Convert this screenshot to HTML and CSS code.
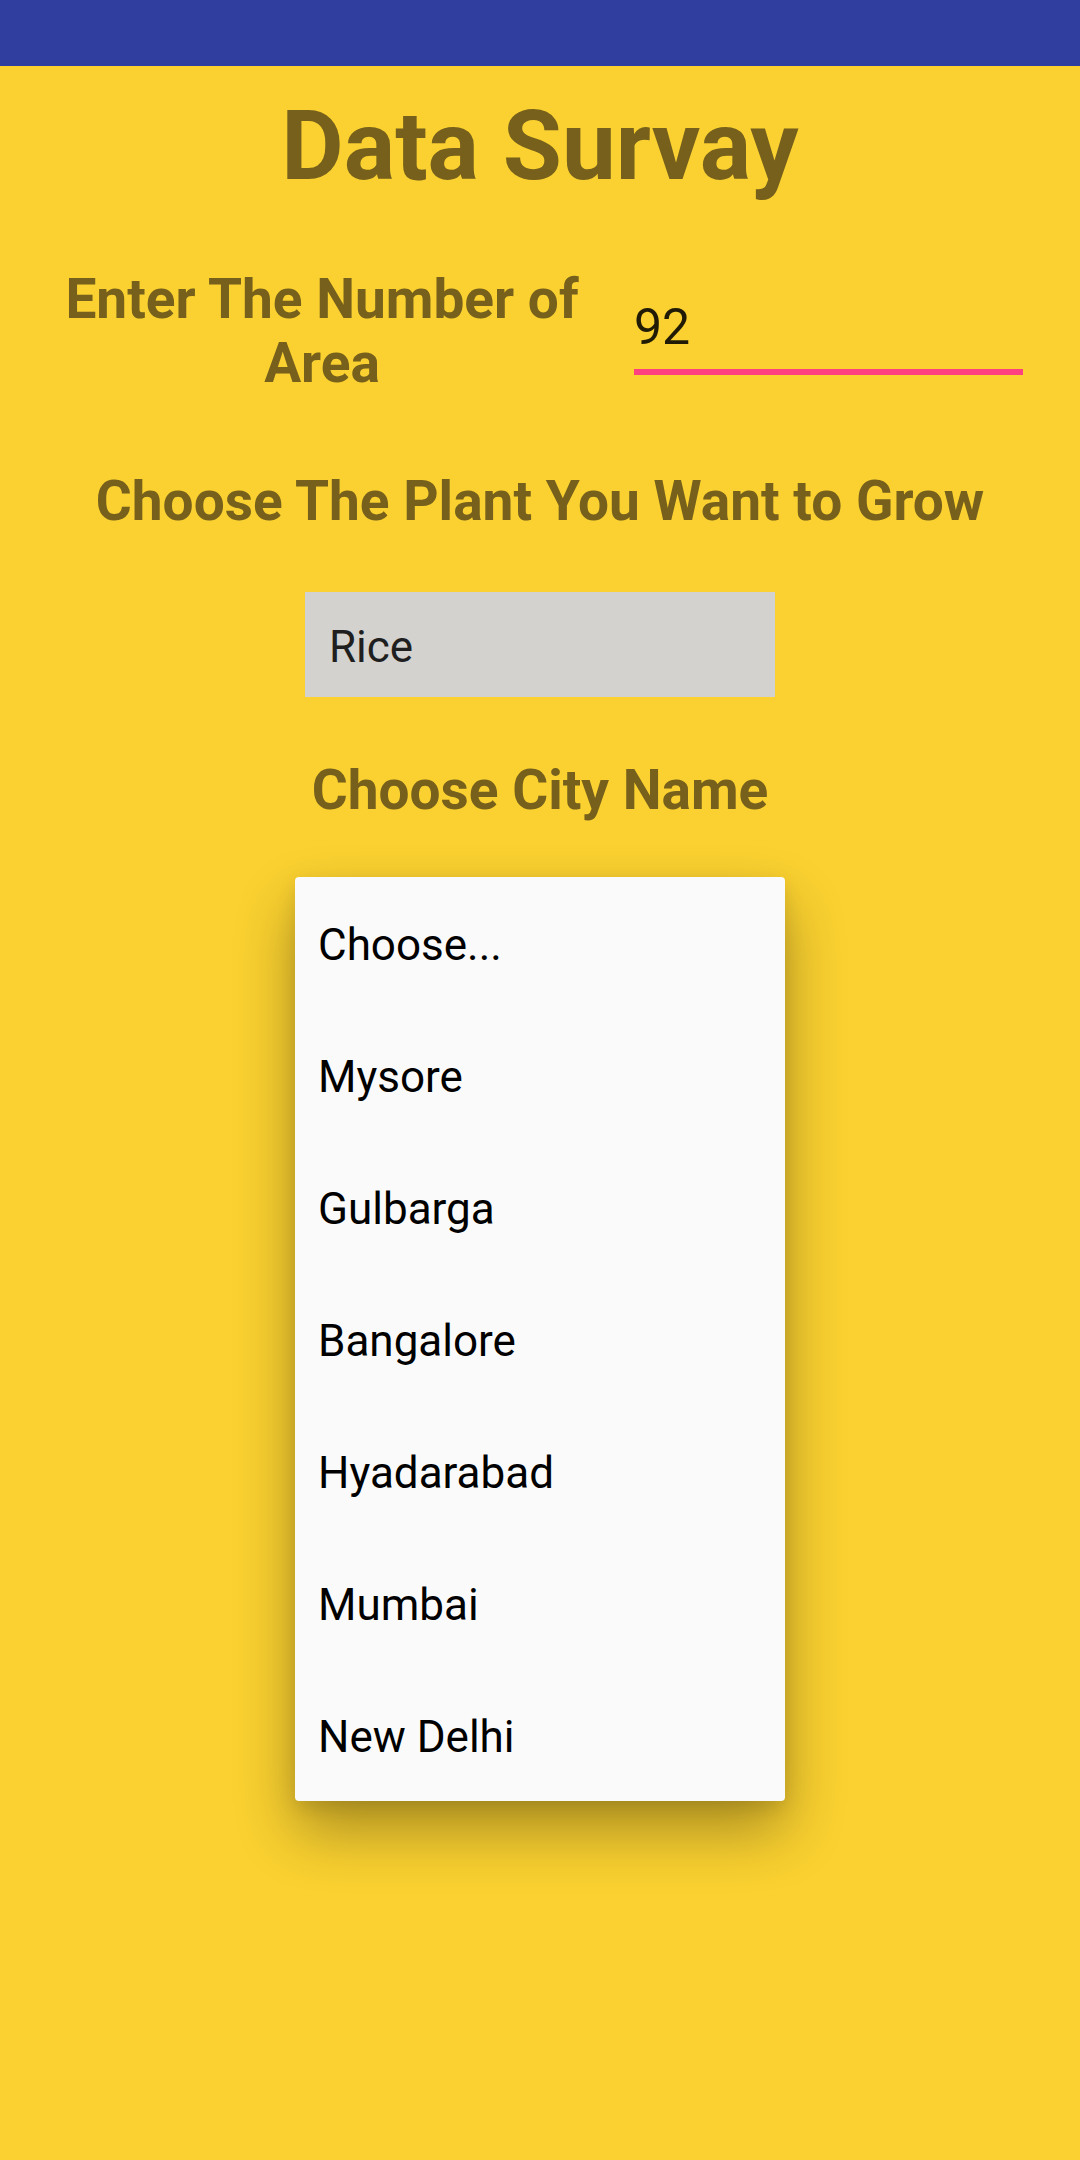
FILE: index.html
```html
<!DOCTYPE html>
<html>
<head>
<meta charset="utf-8">
<link rel="stylesheet" href="styles.css">
</head>
<body>
<div class="statusbar"></div>
<main class="screen">
  <h1 class="title">Data Survay</h1>
  <div class="area-row">
    <div class="label">Enter The Number of Area</div>
    <div class="input">92</div>
  </div>
  <h2 class="heading plant-heading">Choose The Plant You Want to Grow</h2>
  <div class="spinner">Rice</div>
  <h2 class="heading city-heading">Choose City Name</h2>
  <ul class="dropdown">
    <li class="item">Choose...</li>
    <li class="item">Mysore</li>
    <li class="item">Gulbarga</li>
    <li class="item">Bangalore</li>
    <li class="item">Hyadarabad</li>
    <li class="item">Mumbai</li>
    <li class="item">New Delhi</li>
  </ul>
</main>
</body>
</html>
```
FILE: styles.css
```css
html, body {
  margin: 0;
  padding: 0;
}
body {
  width: 1080px;
  height: 2160px;
  background: #fad130;
  font-family: Roboto, "Noto Sans", sans-serif;
  overflow: hidden;
}
.statusbar {
  height: 66px;
  background: #303f9f;
}
.screen {
  display: flex;
  flex-direction: column;
  align-items: center;
}
.title {
  margin: 24px 0 0;
  font-size: 96px;
  line-height: 112px;
  font-weight: 700;
  color: #76601b;
  text-align: center;
}
.area-row {
  align-self: stretch;
  display: grid;
  grid-template-columns: 596px 389px;
  column-gap: 14px;
  align-items: center;
  padding-left: 24px;
  margin-top: 65px;
}
.label {
  font-size: 55px;
  line-height: 64px;
  font-weight: 700;
  color: #76601b;
  text-align: center;
}
.input {
  font-size: 50px;
  line-height: 58px;
  color: rgba(0, 0, 0, 0.87);
  padding: 11px 0 13px;
  border-bottom: 6px solid #ff4081;
}
.heading {
  margin: 0;
  font-size: 55px;
  line-height: 64px;
  font-weight: 700;
  color: #76601b;
  text-align: center;
}
.plant-heading {
  margin-top: 74px;
}
.spinner {
  width: 446px;
  margin-top: 59px;
  padding: 29px 0 24px 24px;
  background: #d3d2cf;
  font-size: 44px;
  line-height: 52px;
  color: #1f1f1f;
}
.city-heading {
  margin-top: 61px;
}
.dropdown {
  list-style: none;
  margin: 55px 0 0;
  padding: 0;
  width: 490px;
  background: #fafafa;
  border-radius: 4px;
  box-shadow: 0 30px 60px rgba(0, 0, 0, 0.32), 0 6px 18px rgba(0, 0, 0, 0.1);
}
.item {
  height: 132px;
  box-sizing: border-box;
  padding: 4px 0 0 23px;
  font-size: 44px;
  line-height: 128px;
  color: #000;
}
```
